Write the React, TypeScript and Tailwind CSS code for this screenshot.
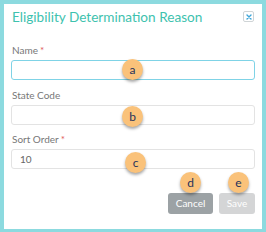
import React from 'react';

const font = { fontFamily: 'Lato, "Open Sans", Arial, sans-serif' };

function Badge({ letter, className }: { letter: string; className: string }) {
  return (
    <div
      className={`absolute flex h-[21px] w-[21px] items-center justify-center rounded-full bg-[#fac27a] text-[12px] leading-none text-[#27325a] shadow-[0_2px_3px_rgba(0,0,0,0.35)] ${className}`}
    >
      {letter}
    </div>
  );
}

function Field({
  label,
  required,
  value,
  focused,
  className,
}: {
  label: string;
  required?: boolean;
  value?: string;
  focused?: boolean;
  className?: string;
}) {
  return (
    <div className={className}>
      <div className="pl-[1px] text-[10px] leading-[12px] text-[#777]">
        {label}
        {required && <span className="ml-[2px] text-[#e05a5a]">*</span>}
      </div>
      <div
        className={`mt-[4px] flex h-[20px] items-center rounded-[3px] border bg-white px-[8px] text-[10px] text-[#666] ${
          focused ? 'border-[#7fd3e6]' : 'border-[#e3e3e3]'
        }`}
      >
        {value}
      </div>
    </div>
  );
}

export default function App() {
  return (
    <div className="h-[232px] w-[266px] bg-[#8cdadf] pl-[4px] pt-[4px]" style={font}>
      <div className="relative flex h-[225px] w-[258px] flex-col bg-white px-[7px] pt-[4px]">
        {/* Header */}
        <div className="flex items-start justify-between">
          <h1 className="pl-[1px] text-[13.6px] leading-[18px] text-[#3ec2ae]">
            Eligibility Determination Reason
          </h1>
          <button className="mr-[1px] mt-[3px] flex h-[11px] w-[11px] items-center justify-center rounded-[2px] border border-[#cfd4d6] bg-white">
            <svg width="6" height="6" viewBox="0 0 6 6">
              <path d="M1 1L5 5M5 1L1 5" stroke="#3fa6d9" strokeWidth="1.4" strokeLinecap="round" />
            </svg>
          </button>
        </div>

        {/* Form */}
        <Field label="Name" required focused className="mt-[18px]" />
        <Field label="State Code" className="mt-[9px]" />
        <Field label="Sort Order" required value="10" className="mt-[8px]" />

        {/* Footer */}
        <div className="mt-[24px] flex justify-end gap-[6px]">
          <button className="h-[21px] w-[45px] rounded-[3px] bg-[#9ca2a5] text-[10px] text-white">Cancel</button>
          <button className="h-[21px] w-[36px] rounded-[3px] bg-[#d4d5d6] text-[10px] text-white">Save</button>
        </div>

        <Badge letter="a" className="left-[118px] top-[55px]" />
        <Badge letter="b" className="left-[118px] top-[102px]" />
        <Badge letter="c" className="left-[121px] top-[148px]" />
        <Badge letter="d" className="left-[176px] top-[168px]" />
        <Badge letter="e" className="left-[224px] top-[168px]" />
      </div>
    </div>
  );
}
